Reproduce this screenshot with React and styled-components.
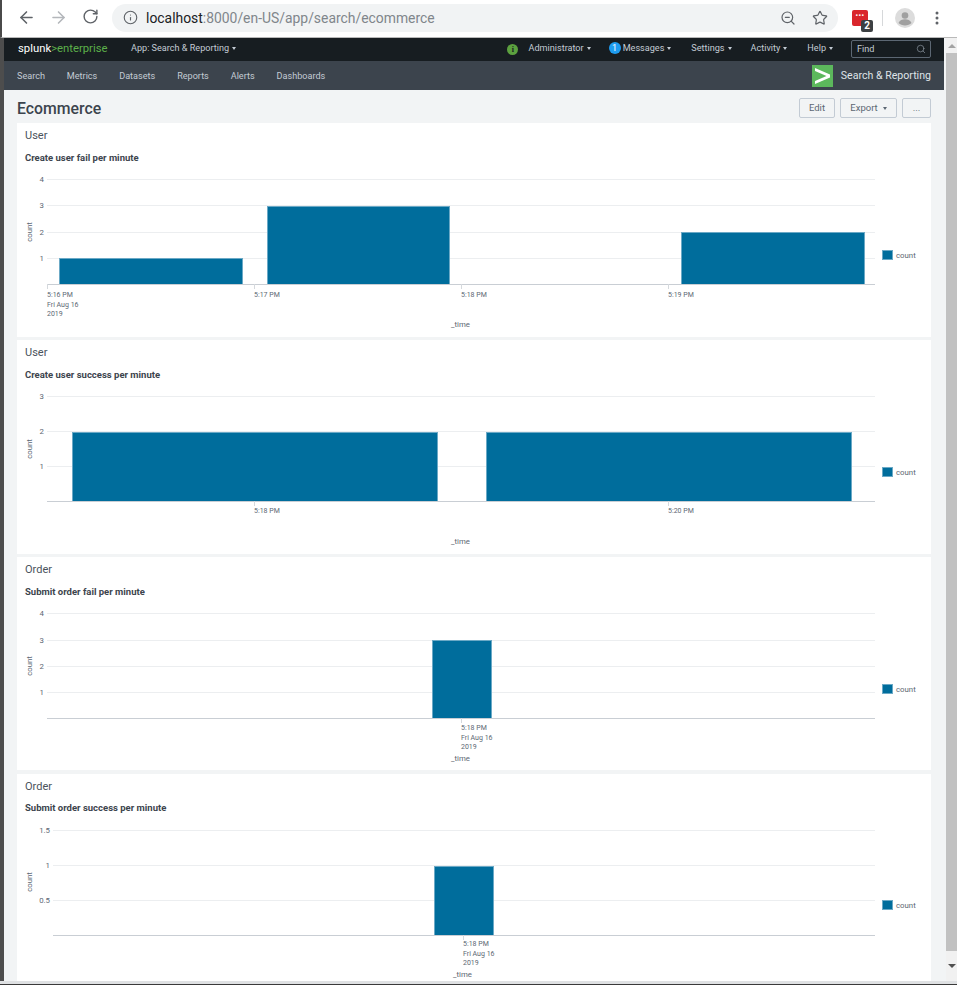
import React from "react";
import styled, { createGlobalStyle } from "styled-components";
import { ArrowLeft, ArrowRight, RotateCw, Info, ZoomOut, Star, Search } from "lucide-react";

const Global = createGlobalStyle`
  html, body { margin: 0; padding: 0; background: #fff; }
  * { box-sizing: border-box; }
`;
const SANS = `Roboto, "Open Sans", "Liberation Sans", sans-serif`;
const UI = `Roboto, "Open Sans", "Liberation Sans", sans-serif`;

const Root = styled.div`
  width: 957px; height: 985px; overflow: hidden; display: flex; flex-direction: column;
  font-family: ${UI}; background: #fff;
`;
/* Browser chrome */
const BrowserBar = styled.header`
  height: 38px; flex: none; display: flex; align-items: center; background: #fff;
  border-left: 2px solid #4a4a4a; border-bottom: 1px solid #b9b9b9; padding: 0 0 2px 0;
`;
const NavIcon = styled.span`
  display: flex; width: 32px; justify-content: center; color: ${p => p.$dim ? "#b4b7bb" : "#5f6368"};
`;
const NavIcons = styled.div`display: flex; padding-left: 8px; gap: 0; width: 110px; flex: none;`;
const UrlPill = styled.div`
  width: 726px; height: 28px; flex: none; border-radius: 14px; background: #f1f3f4;
  display: flex; align-items: center; padding: 0 8px 0 11px; color: #5f6368;
`;
const UrlText = styled.div`
  flex: 1; margin-left: 8px; font: 13.9px ${SANS}; color: #80868b; white-space: nowrap;
`;
const UrlHost = styled.span`color: #202124;`;
const PillIcons = styled.div`display: flex; gap: 16px; color: #5f6368; align-items: center; padding-right: 2px;`;
const Extension = styled.div`
  position: relative; width: 16px; height: 16px; margin-left: 14px; background: #d9262c; border-radius: 2px; flex: none;
  display: flex; align-items: center; justify-content: center; color: #fff; font: bold 7px/1 ${SANS}; letter-spacing: .5px; padding-bottom: 3px;
`;
const ExtBadge = styled.span`
  position: absolute; right: -5px; bottom: -6px; width: 12px; height: 12px; background: #3c4043; border-radius: 2px;
  color: #fff; font: bold 10px/12px ${SANS}; text-align: center; letter-spacing: 0;
`;
const ChromeDivider = styled.div`width: 1px; height: 16px; background: #d6d8da; margin-left: 14px; flex: none;`;
const Avatar = styled.svg`width: 20px; height: 20px; margin-left: 12px; flex: none;`;
const MenuDots = styled.svg`width: 4px; height: 14px; margin-left: 20px; flex: none;`;

/* Viewport */
const Viewport = styled.div`flex: 1; min-height: 0; display: flex; border-left: 4px solid #4d4d4d;`;
const Page = styled.main`flex: 1; min-width: 0; background: #f2f4f5; display: flex; flex-direction: column; overflow: hidden;`;
const ScrollBar = styled.div`
  width: 13px; flex: none; background: #f1f1f1; display: flex; flex-direction: column; border-left: 2px solid #f2f4f5;
`;
const ScrollArrow = styled.div`
  height: ${p => p.$h}px; flex: none; display: flex; align-items: center; justify-content: center;
`;
const ArrowGlyph = styled.i`
  display: block; width: 0; height: 0; border: 4px solid transparent;
  ${p => p.$up
    ? `border-top: 0; border-bottom: 4px solid #a3a3a3;`
    : `border-bottom: 0; border-top: 4px solid #505050;`}
`;
const ScrollThumb = styled.div`flex: 1; background: #c1c1c1;`;
const BottomEdge = styled.div`height: 4px; flex: none; background: #dfe1e3; border-bottom: 1px solid #3a3a3a;`;

/* Splunk nav */
const TopNav = styled.div`
  height: 23px; flex: none; background: #171d21; display: flex; align-items: center; padding: 0 13px 1px 13px;
  color: #c3cbd4; font-size: 9.1px;
`;
const Logo = styled.div`font: 400 11.3px ${SANS}; color: #fff; width: 114px; flex: none; padding: 0 0 2px 1px;`;
const LogoGreen = styled.span`color: #5cb04a;`;
const TopLeft = styled.div`flex: 1; display: flex; align-items: center;`;
const TopItem = styled.span`
  display: inline-flex; align-items: center; white-space: nowrap; margin-left: ${p => p.$ml || 0}px; padding-bottom: 2px;
`;
const Caret = styled.i`
  display: inline-block; width: 0; height: 0; margin-left: 3px; margin-top: 1px; border: 2.5px solid transparent;
  border-top: 3px solid ${p => p.$c || "currentColor"}; border-bottom: 0;
`;
const InfoDot = styled.span`
  width: 11px; height: 11px; border-radius: 50%; background: #5ca13f; color: #171d21; flex: none;
  font: bold 8px/11px "Liberation Serif", serif; text-align: center;
`;
const MsgDot = styled.span`
  width: 12px; height: 12px; border-radius: 50%; background: #1e9cf0; color: #fff; flex: none; margin-right: 2px;
  font: 9px/12px ${UI}; text-align: center;
`;
const FindBox = styled.div`
  width: 80px; height: 18px; margin-left: 18px; border: 1px solid #5c6773; border-radius: 2px; display: flex; align-items: center;
  justify-content: space-between; padding: 0 4px 0 5px; color: #c3cbd4; font-size: 9.1px; background: #171d21;
`;
const AppBar = styled.nav`
  height: 29px; flex: none; background: #3c444d; display: flex; align-items: center; justify-content: space-between;
  padding: 0 13px; color: #c3cbd4; font-size: 9.1px;
`;
const AppLinks = styled.div`display: flex; gap: 21.9px;`;
const AppBrand = styled.div`display: flex; align-items: center; gap: 8px; font-size: 10.6px; color: #dfe3e8;`;
const AppLogo = styled.svg`width: 21px; height: 22px; display: block;`;

/* Dashboard */
const HeaderRow = styled.div`
  height: 33px; flex: none; display: flex; align-items: center; justify-content: space-between; padding: 2px 13px 0; 
`;
const PageTitle = styled.h1`margin: 2px 0 0; font: 500 15.8px ${UI}; color: #3c444d;`;
const Buttons = styled.div`display: flex; gap: 5px;`;
const Btn = styled.button`
  height: 20px; width: ${p => p.$w}px; padding: 0; border: 1px solid #c3cbd4; border-radius: 2px; background: #f2f4f5;
  color: #5c6773; font: 9.5px ${UI}; display: flex; align-items: center; justify-content: center; gap: 2px;
`;
const Panels = styled.div`display: flex; flex-direction: column; padding: 0 13px; gap: 3px;`;
const Panel = styled.section`
  background: #fff; height: ${p => p.$h}px; width: 914px; flex: none; display: flex; flex-direction: column;
  margin-top: ${p => p.$mt || 0}px;
`;
const PanelHead = styled.div`height: ${p => p.$h}px; flex: none; padding: 6px 0 0 8px; font: 11px/14px ${UI}; color: #4a535c;`;
const PanelTitle = styled.div`height: 22px; flex: none; padding: 4px 0 0 8px; font: 700 9.5px/14px ${UI}; color: #3c444d;`;
const ChartSvg = styled.svg`
  display: block; flex: none; font-family: ${UI};
  text { font-size: 7.8px; fill: #5c6773; }
`;
const TimeLabel = styled.text`
  && { font-size: 7px; }
`;

const BLUE = "#006d9c";

function Chart({ h, top, grid, yLabels, axis, left = 30, bars, ticks, xLabels, timeX, timeY, countY, legendY }) {
  const vh = h - top;
  return (
    <ChartSvg width="914" height={vh} viewBox={`0 ${top} 914 ${vh}`}>
      {grid.map((y, i) => (
        <g key={y}>
          <line x1={left} x2="858" y1={y + 0.5} y2={y + 0.5} stroke="#eceef0" strokeWidth="1" />
          <text x={left - 3} y={y + 2.5} textAnchor="end">{yLabels[i]}</text>
        </g>
      ))}
      {bars.map(([x, w, t]) => (
        <rect key={x} x={x + 0.5} y={t + 0.5} width={w} height={axis - t} fill={BLUE} stroke="#6ba9c6" strokeWidth="1" />
      ))}
      <line x1={left} x2="858" y1={axis + 0.5} y2={axis + 0.5} stroke="#c9ced4" />
      {ticks.map(x => <line key={x} x1={x + 0.5} x2={x + 0.5} y1={axis} y2={axis + 5} stroke="#d5d9dd" />)}
      {xLabels.map(([x, y, t]) => <TimeLabel key={t + x} x={x} y={y}>{t}</TimeLabel>)}
      <text x={timeX} y={timeY}>_time</text>
      <text transform={`translate(15 ${countY}) rotate(-90)`} textAnchor="middle">count</text>
      <rect x="865.5" y={legendY - 4.5} width="10" height="9" fill={BLUE} stroke="#6ba9c6" />
      <text x="879" y={legendY + 3}>count</text>
    </ChartSvg>
  );
}

const panels = [
  {
    h: 214, headH: 24, head: "User", title: "Create user fail per minute", chart: {
      top: 46, grid: [56, 82, 109, 135], yLabels: ["4", "3", "2", "1"], axis: 161,
      bars: [[42, 183, 135], [250, 182, 83], [664, 183, 109]],
      ticks: [30, 237, 444, 651],
      xLabels: [[30, 174, "5:16 PM"], [30, 184, "Fri Aug 16"], [30, 193, "2019"], [237, 174, "5:17 PM"], [444, 174, "5:18 PM"], [651, 174, "5:19 PM"]],
      timeX: 434, timeY: 204, countY: 109, legendY: 132
    }
  },
  {
    h: 214, headH: 24, head: "User", title: "Create user success per minute", chart: {
      top: 46, grid: [56, 91, 126], yLabels: ["3", "2", "1"], axis: 161,
      bars: [[55, 365, 92], [469, 365, 92]],
      ticks: [237, 651],
      xLabels: [[237, 173, "5:18 PM"], [651, 173, "5:20 PM"]],
      timeX: 434, timeY: 204, countY: 109, legendY: 132
    }
  },
  {
    h: 213, headH: 24, head: "Order", title: "Submit order fail per minute", chart: {
      top: 46, grid: [56, 83, 109, 135], yLabels: ["4", "3", "2", "1"], axis: 161,
      bars: [[415, 59, 83]],
      ticks: [444],
      xLabels: [[444, 173, "5:18 PM"], [444, 183, "Fri Aug 16"], [444, 192, "2019"]],
      timeX: 434, timeY: 204, countY: 109, legendY: 132
    }
  },
  {
    h: 207, headH: 23, gapTop: 1, head: "Order", title: "Submit order success per minute", chart: {
      top: 45, grid: [56, 91, 126], yLabels: ["1.5", "1", "0.5"], axis: 161,
      left: 36,
      bars: [[417, 59, 92]],
      ticks: [446],
      xLabels: [[446, 172, "5:18 PM"], [446, 182, "Fri Aug 16"], [446, 191, "2019"]],
      timeX: 436, timeY: 203, countY: 108, legendY: 131
    }
  }
];

export default function App() {
  return (
    <Root>
      <Global />
      <BrowserBar>
        <NavIcons>
          <NavIcon><ArrowLeft size={19} strokeWidth={2} /></NavIcon>
          <NavIcon $dim><ArrowRight size={19} strokeWidth={2} /></NavIcon>
          <NavIcon><RotateCw size={17} strokeWidth={2} /></NavIcon>
        </NavIcons>
        <UrlPill>
          <Info size={15} strokeWidth={1.8} />
          <UrlText><UrlHost>localhost</UrlHost>:8000/en-US/app/search/ecommerce</UrlText>
          <PillIcons>
            <ZoomOut size={16} strokeWidth={1.8} />
            <Star size={16} strokeWidth={1.8} />
          </PillIcons>
        </UrlPill>
        <Extension>•••<ExtBadge>2</ExtBadge></Extension>
        <ChromeDivider />
        <Avatar viewBox="0 0 20 20">
          <circle cx="10" cy="10" r="10" fill="#dcdcdc" />
          <circle cx="10" cy="7.5" r="3.3" fill="#a0a0a0" />
          <path d="M3.5 15c1-2.800 4-3.700 6.500-3.700s5.500.9 6.500 3.700c-1.500 1.600-4 2.500-6.500 2.500s-5-.9-6.500-2.500z" fill="#a0a0a0" />
        </Avatar>
        <MenuDots viewBox="0 0 4 14">
          <circle cx="2" cy="2" r="1.500" fill="#5f6368" />
          <circle cx="2" cy="7" r="1.500" fill="#5f6368" />
          <circle cx="2" cy="12" r="1.500" fill="#5f6368" />
        </MenuDots>
      </BrowserBar>
      <Viewport>
        <Page>
          <TopNav>
            <TopLeft>
              <Logo>splunk<LogoGreen>&gt;enterprise</LogoGreen></Logo>
              <TopItem>App: Search &amp; Reporting<Caret /></TopItem>
            </TopLeft>
            <InfoDot>i</InfoDot>
            <TopItem $ml={10}>Administrator<Caret /></TopItem>
            <TopItem $ml={18}><MsgDot>1</MsgDot>Messages<Caret /></TopItem>
            <TopItem $ml={20}>Settings<Caret /></TopItem>
            <TopItem $ml={19}>Activity<Caret /></TopItem>
            <TopItem $ml={20}>Help<Caret /></TopItem>
            <FindBox>Find<Search size={10} strokeWidth={1.6} color="#8f9aa5" /></FindBox>
          </TopNav>
          <AppBar>
            <AppLinks>
              <span>Search</span><span>Metrics</span><span>Datasets</span><span>Reports</span><span>Alerts</span><span>Dashboards</span>
            </AppLinks>
            <AppBrand>
              <AppLogo viewBox="0 0 21 22">
                <rect width="21" height="22" fill="#5cb85c" />
                <path d="M3 3 L18 9.500 V12.500 L3 19 V16 L14.500 11 L3 6z" fill="#fff" />
              </AppLogo>
              Search &amp; Reporting
            </AppBrand>
          </AppBar>
          <HeaderRow>
            <PageTitle>Ecommerce</PageTitle>
            <Buttons>
              <Btn $w={36}>Edit</Btn>
              <Btn $w={57}>Export <Caret $c="#5c6773" /></Btn>
              <Btn $w={29}>...</Btn>
            </Buttons>
          </HeaderRow>
          <Panels>
            {panels.map((p, i) => (
              <Panel key={i} $h={p.h} $mt={p.gapTop}>
                <PanelHead $h={p.headH}>{p.head}</PanelHead>
                <PanelTitle>{p.title}</PanelTitle>
                <Chart h={p.h} {...p.chart} />
              </Panel>
            ))}
          </Panels>
        </Page>
        <ScrollBar>
          <ScrollArrow $h={15}><ArrowGlyph $up /></ScrollArrow>
          <ScrollThumb />
          <ScrollArrow $h={30}><ArrowGlyph /></ScrollArrow>
        </ScrollBar>
      </Viewport>
      <BottomEdge />
    </Root>
  );
}
